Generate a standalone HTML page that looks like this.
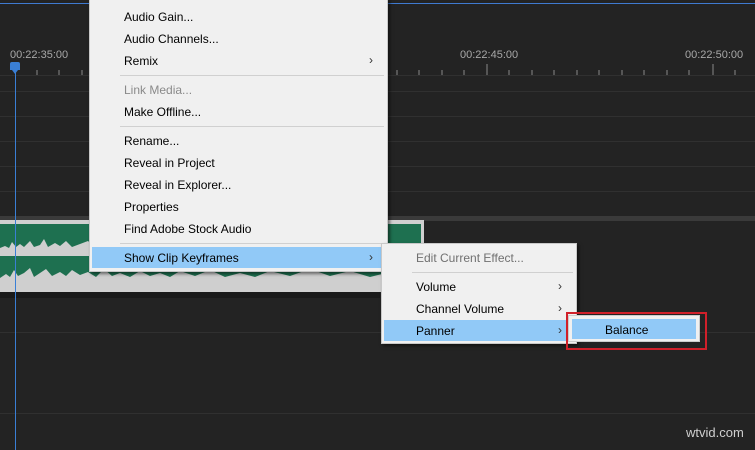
<!DOCTYPE html><html><head><style>
body{margin:0;width:755px;height:450px;background:#232323;position:relative;overflow:hidden;font-family:"Liberation Sans",sans-serif}
.a{position:absolute}
.hl{position:absolute;left:0;width:755px;height:1px;background:#303030}
.menu{position:absolute;background:#f0f0f0;border:1px solid #c8c8c8;box-shadow:2px 2px 3px rgba(0,0,0,.5)}
.it{position:absolute;font-size:12px;color:#000;white-space:nowrap}
.sep{position:absolute;height:1px;background:#d0d0d0}
.tc{position:absolute;color:#a8a8a8;font-size:11px;top:49px}
.arr{position:absolute;font-size:12px;color:#333}
</style></head><body>
<div class="a" style="left:0;top:3px;width:755px;height:1px;background:#3f7ad0"></div>
<div class="tc" style="left:10px">00:22:35:00</div>
<div class="tc" style="left:460px">00:22:45:00</div>
<div class="tc" style="left:685px">00:22:50:00</div>
<svg class="a" style="left:0;top:62px" width="755" height="16">
<g stroke="#8a8a8a" stroke-width="1">
<line x1="37" y1="8" x2="37" y2="13"/><line x1="59" y1="8" x2="59" y2="13"/><line x1="82" y1="8" x2="82" y2="13"/>
<line x1="397" y1="8" x2="397" y2="13"/><line x1="419" y1="8" x2="419" y2="13"/><line x1="442" y1="8" x2="442" y2="13"/><line x1="464" y1="8" x2="464" y2="13"/><line x1="487" y1="2" x2="487" y2="13"/><line x1="509" y1="8" x2="509" y2="13"/><line x1="532" y1="8" x2="532" y2="13"/><line x1="554" y1="8" x2="554" y2="13"/><line x1="577" y1="8" x2="577" y2="13"/><line x1="599" y1="8" x2="599" y2="13"/><line x1="622" y1="8" x2="622" y2="13"/><line x1="644" y1="8" x2="644" y2="13"/><line x1="667" y1="8" x2="667" y2="13"/><line x1="689" y1="8" x2="689" y2="13"/><line x1="713" y1="2" x2="713" y2="13"/><line x1="735" y1="8" x2="735" y2="13"/>
</g></svg>
<div class="hl" style="top:75px"></div><div class="hl" style="top:91px"></div><div class="hl" style="top:116px"></div><div class="hl" style="top:141px"></div><div class="hl" style="top:166px"></div><div class="hl" style="top:191px"></div>
<div class="a" style="left:0;top:216px;width:755px;height:5px;background:#3a3a3a"></div>
<div class="hl" style="top:332px"></div><div class="hl" style="top:413px"></div>
<div class="a" style="left:0;top:292px;width:380px;height:6px;background:#1a1a1a"></div>
<div class="a" style="left:0;top:220px;width:424px;height:72px;background:#d0d0d0"></div>
<div class="a" style="left:0;top:224px;width:421px;height:66px;background:#1e7050"></div>
<svg class="a" style="left:0;top:224px" width="421" height="66">
<path d="M0 24 L5 22 L9 24 L12 18 L16 23 L20 20 L24 23 L30 17 L34 23 L40 21 L44 15 L48 23 L55 19 L60 22 L66 17 L72 23 L80 20 L88 17 L95 23 L100 19 L108 22 L115 18 L122 23 L130 20 L140 23 L150 19 L160 23 L175 20 L190 23 L210 19 L230 23 L260 20 L300 23 L340 19 L380 23 L421 20 L421 32 L0 32Z" fill="#cfcfcf"/>
<path d="M0 54 L6 50 L10 53 L14 46 L18 52 L24 49 L30 44 L34 53 L40 49 L46 45 L52 52 L60 48 L66 52 L72 46 L80 51 L88 48 L96 53 L104 45 L112 52 L120 49 L130 53 L140 47 L150 52 L160 49 L170 53 L180 47 L195 52 L210 46 L225 53 L240 49 L255 53 L270 47 L290 52 L310 45 L330 52 L350 47 L370 53 L390 48 L410 52 L421 49 L421 66 L0 66Z" fill="#cfcfcf"/>
</svg>
<div class="a" style="left:15px;top:64px;width:1px;height:386px;background:#3a7fd5"></div>
<div class="a" style="left:10px;top:62px;width:10px;height:8px;background:#3a7fd5;border-radius:2px 2px 0 0"></div>
<div class="a" style="left:12px;top:70px;width:0;height:0;border-left:3px solid transparent;border-right:3px solid transparent;border-top:4px solid #3a7fd5"></div>

<div class="menu" style="left:89px;top:-2px;width:297px;height:272px">
<div class="it" style="left:34px;top:11px">Audio Gain...</div>
<div class="it" style="left:34px;top:33px">Audio Channels...</div>
<div class="it" style="left:34px;top:55px">Remix</div><div class="arr" style="left:279px;top:54px">›</div>
<div class="sep" style="left:30px;top:76px;width:264px"></div>
<div class="it" style="left:34px;top:84px;color:#8a8a8a">Link Media...</div>
<div class="it" style="left:34px;top:106px">Make Offline...</div>
<div class="sep" style="left:30px;top:127px;width:264px"></div>
<div class="it" style="left:34px;top:135px">Rename...</div>
<div class="it" style="left:34px;top:157px">Reveal in Project</div>
<div class="it" style="left:34px;top:179px">Reveal in Explorer...</div>
<div class="it" style="left:34px;top:201px">Properties</div>
<div class="it" style="left:34px;top:223px">Find Adobe Stock Audio</div>
<div class="sep" style="left:30px;top:244px;width:264px"></div>
<div class="a" style="left:2px;top:248px;width:289px;height:21px;background:#91c9f7"></div>
<div class="it" style="left:34px;top:252px">Show Clip Keyframes</div><div class="arr" style="left:279px;top:251px">›</div>
</div>

<div class="menu" style="left:381px;top:243px;width:194px;height:99px">
<div class="it" style="left:34px;top:7px;color:#707070">Edit Current Effect...</div>
<div class="sep" style="left:30px;top:28px;width:161px"></div>
<div class="it" style="left:34px;top:36px">Volume</div><div class="arr" style="left:176px;top:35px">›</div>
<div class="it" style="left:34px;top:58px">Channel Volume</div><div class="arr" style="left:176px;top:57px">›</div>
<div class="a" style="left:2px;top:76px;width:183px;height:21px;background:#91c9f7"></div>
<div class="it" style="left:34px;top:80px">Panner</div><div class="arr" style="left:176px;top:79px">›</div>
</div>

<div class="a" style="left:568px;top:315px;width:132px;height:27px;background:#f0f0f0;border:1px solid #ccc;box-sizing:border-box"></div>
<div class="a" style="left:572px;top:319px;width:124px;height:20px;background:#91c9f7"></div>
<div class="it" style="left:605px;top:323px">Balance</div>
<div class="a" style="left:566px;top:312px;width:141px;height:38px;border:2px solid #d0202a;box-sizing:border-box"></div>
<div class="a" style="left:686px;top:425px;color:#cfcfcf;font-size:13px">wtvid.com</div>
</body></html>
